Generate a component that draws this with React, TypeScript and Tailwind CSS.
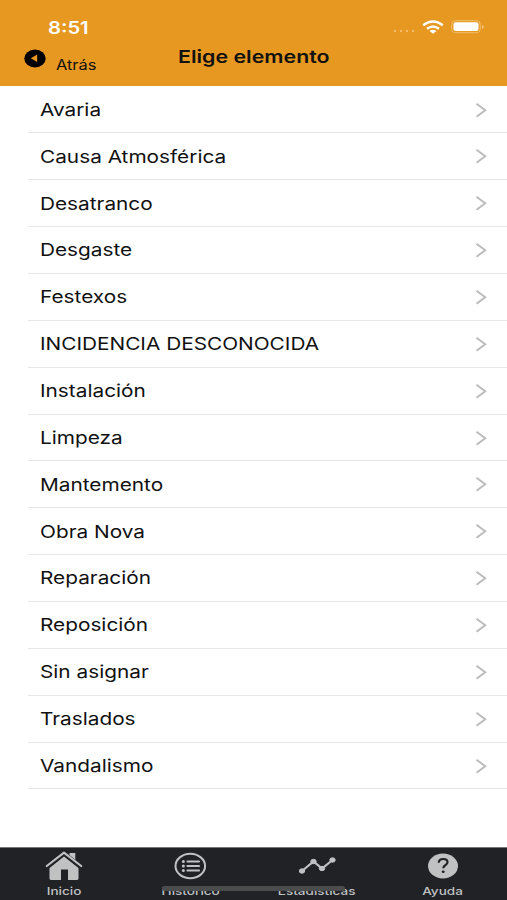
import React from 'react';

const elements = [
  'Avaria',
  'Causa Atmosférica',
  'Desatranco',
  'Desgaste',
  'Festexos',
  'INCIDENCIA DESCONOCIDA',
  'Instalación',
  'Limpeza',
  'Mantemento',
  'Obra Nova',
  'Reparación',
  'Reposición',
  'Sin asignar',
  'Traslados',
  'Vandalismo',
];

const HomeIcon = () => (
  <svg className="h-8 w-10" viewBox="0 0 40 32" fill="#bfc1c3">
    <path d="M25.5 3h5.8v8.6l-5.8-4.8z" />
    <path d="M20 6.5 34.5 18v10.5q0 1.500-2 1.500H24V19.500h-7V30H7.500q-2 0-2-1.500V18z" />
    <path d="M3 16.800 20 3.200l17 13.600" fill="none" stroke="#212226" strokeWidth="4" />
    <path d="M2.800 16 20 2.700 37.200 16" fill="none" stroke="#bfc1c3" strokeWidth="2.200" strokeLinecap="round" strokeLinejoin="round" />
  </svg>
);

const ListIcon = () => (
  <svg className="h-8 w-10" viewBox="0 0 40 32" fill="none" stroke="#bfc1c3">
    <ellipse cx="20.300" cy="16" rx="14.800" ry="12.200" strokeWidth="2" />
    <path d="M17.500 11.500h11.500M17.500 16h11.500M17.500 20.500h11.500" strokeWidth="2.200" strokeLinecap="round" />
    <path d="M13.300 11.500h.1M13.300 16h.1M13.300 20.500h.1" strokeWidth="3" strokeLinecap="round" />
  </svg>
);

const ChartIcon = () => (
  <svg className="h-8 w-10" viewBox="0 0 40 32" fill="#bfc1c3" stroke="#bfc1c3">
    <path d="m5 21 11.500-9.500 8.500 7L35.500 10" fill="none" strokeWidth="2.200" />
    <ellipse cx="5" cy="21" rx="2.700" ry="2.200" />
    <ellipse cx="16.500" cy="11.500" rx="2.700" ry="2.200" />
    <ellipse cx="25" cy="18.500" rx="2.700" ry="2.200" />
    <ellipse cx="35.500" cy="10" rx="2.700" ry="2.200" />
  </svg>
);

const HelpIcon = () => (
  <svg className="h-8 w-10" viewBox="0 0 40 32" fill="none">
    <ellipse cx="20" cy="16" rx="15" ry="12.500" fill="#bfc1c3" />
    <path d="M15.700 12.700q.2-3.700 4.600-3.700 4.200 0 4.200 3.300 0 1.700-2.200 3-2 1.200-2 3" stroke="#212226" strokeWidth="2.200" />
    <ellipse cx="20.200" cy="21.800" rx="1.500" ry="1.300" fill="#212226" />
  </svg>
);

const tabs = [
  { label: 'Inicio', Icon: HomeIcon },
  { label: 'Histórico', Icon: ListIcon },
  { label: 'Estadísticas', Icon: ChartIcon },
  { label: 'Ayuda', Icon: HelpIcon },
];

const App: React.FC = () => (
  <div className="flex h-[900px] w-[507px] flex-col overflow-hidden bg-white font-[Inter,sans-serif] text-[#111]">
    <header className="h-[86px] shrink-0 bg-[#e69820]">
      <div className="flex h-[44px] items-start justify-between pl-12 pr-[23px] pt-[17px] text-white">
        <span className="origin-left scale-x-[1.190] text-[17px] font-semibold leading-[22px]">8:51</span>
        <div className="flex h-5 items-center">
          <svg className="mr-1.5 mt-2 h-1 w-6" viewBox="0 0 24 4" fill="#f0bd6c">
            <circle cx="3" cy="2" r="1.200" />
            <circle cx="9" cy="2" r="1.200" />
            <circle cx="15" cy="2" r="1.200" />
            <circle cx="21" cy="2" r="1.200" />
          </svg>
          <svg className="h-[14px] w-[22px]" viewBox="0 0 22 14" fill="none" stroke="white" strokeWidth="2.500">
            <path d="M1.200 5.200q9.800-7.400 19.600 0M5 8.700q6-4.500 12 0" />
            <path d="m7.500 11 3.500 2.800 3.500-2.800q-3.500-2.500-7 0z" fill="white" stroke="none" />
          </svg>
          <svg className="ml-[7px] h-[14px] w-[33px]" viewBox="0 0 33 14" fill="none">
            <rect x=".7" y=".7" width="28.500" height="12" rx="3.500" stroke="#f0bd6c" />
            <rect x="2.500" y="2.300" width="25" height="8.800" rx="2" fill="white" />
            <path d="M31 5v4q1.700-.7 1.700-2T31 5z" fill="#f3c985" />
          </svg>
        </div>
      </div>
      <div className="grid h-[42px] grid-cols-[178px_1fr]">
        <div className="flex pl-6 pt-[5px]">
          <svg className="h-[19px] w-[22px]" viewBox="0 0 22 19">
            <ellipse cx="11" cy="9.500" rx="10.700" ry="9" fill="black" />
            <path d="M13.200 5.500v7.600L6.800 9.300z" fill="#e69820" />
          </svg>
          <span className="ml-2.5 mt-[6px] origin-left scale-x-[1.170] text-[14px] leading-[19px]">Atrás</span>
        </div>
        <h1 className="origin-left scale-x-[1.220] justify-self-start pt-px text-[17.500px] font-semibold leading-[23px]">Elige elemento</h1>
      </div>
    </header>

    <main className="flex-1 pl-7 pt-[0.600px]">
      {elements.map((name) => (
        <button key={name} className="flex h-[46.870px] w-full items-center justify-between border-b border-[#e7e7e7] pl-3 pr-5">
          <span className="origin-left scale-x-[1.188] whitespace-nowrap pt-px text-[17.500px]">{name}</span>
          <svg className="h-4 w-3" viewBox="0 0 12 16" fill="none" stroke="#bcbcbe" strokeWidth="2">
            <path d="m1.500 1.700 8.700 6.500-8.700 6.500" />
          </svg>
        </button>
      ))}
    </main>

    <nav className="relative flex h-[53px] shrink-0 justify-between border-t border-[#77787a] bg-[#212226] px-6 text-[#bfc1c3]">
      {tabs.map(({ label, Icon }) => (
        <button key={label} className="flex w-20 flex-col items-center pt-[2px]">
          <Icon />
          <span className="mt-[2px] scale-x-[1.230] whitespace-nowrap text-[11px] font-medium leading-[14px]">{label}</span>
        </button>
      ))}
      <div className="absolute left-[162px] top-[38px] h-[5px] w-[183px] rounded-full bg-[#4b4c4e]" />
    </nav>
  </div>
);

export default App;
